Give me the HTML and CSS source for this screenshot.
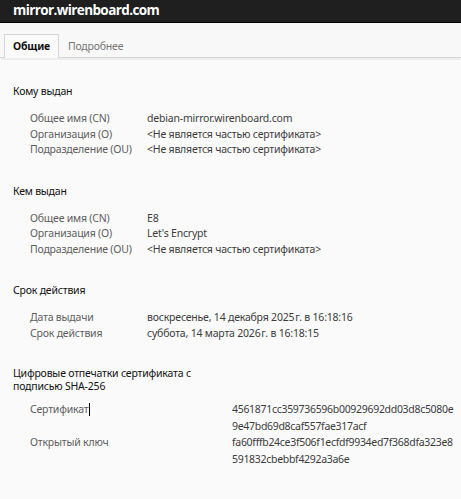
FILE: index.html
```html
<!DOCTYPE html>
<html lang="ru">
<head>
  <meta charset="UTF-8" />
  <title>Просмотр сертификата</title>
  <link rel="stylesheet" href="styles.css">
</head>
<body>
  <div class="titlebar">mirror.wirenboard.com</div>

  <div class="tabs">
    <div class="tab active">Общие</div>
    <div class="tab">Подробнее</div>
  </div>

  <div class="content">
    <!-- Subject -->
    <section class="section">
      <h2>Кому выдан</h2>
      <div class="rows">
        <div class="label">Общее имя (CN)</div>
        <div class="value">debian-mirror.wirenboard.com</div>
        <div class="label">Организация (O)</div>
        <div class="value">&lt;Не является частью сертификата&gt;</div>
        <div class="label">Подразделение (OU)</div>
        <div class="value">&lt;Не является частью сертификата&gt;</div>
      </div>
    </section>

    <!-- Issuer -->
    <section class="section">
      <h2>Кем выдан</h2>
      <div class="rows">
        <div class="label">Общее имя (CN)</div>
        <div class="value">E8</div>
        <div class="label">Организация (O)</div>
        <div class="value">Let's Encrypt</div>
        <div class="label">Подразделение (OU)</div>
        <div class="value">&lt;Не является частью сертификата&gt;</div>
      </div>
    </section>

    <!-- Validity -->
    <section class="section">
      <h2>Срок действия</h2>
      <div class="rows">
        <div class="label">Дата выдачи</div>
        <div class="value">воскресенье, 14 декабря 2025&#8202;г. в 16:18:16</div>
        <div class="label">Срок действия</div>
        <div class="value">суббота, 14 марта 2026&#8202;г. в 16:18:15</div>
      </div>
    </section>

    <!-- Fingerprints -->
    <section class="section">
      <h2 class="narrow">Цифровые отпечатки сертификата с подписью SHA-256</h2>
      <div class="rows hashes">
        <div class="label">Сертификат<span class="caret"></span></div>
        <div class="value">4561871cc359736596b00929692dd03d8c5080e<br>9e47bd69d8caf557fae317acf</div>
        <div class="label">Открытый ключ</div>
        <div class="value">fa60fffb24ce3f506f1ecfdf9934ed7f368dfa323e8<br>591832cbebbf4292a3a6e</div>
      </div>
    </section>
  </div>
</body>
</html>
```

FILE: styles.css
```css
body {
  margin: 0;
  font-family: "Noto Sans", "Open Sans", sans-serif;
  font-size: 10.5px;
  letter-spacing: -0.2px;
  color: #333;
  background: #fafafa;
}

.titlebar {
  height: 22px;
  line-height: 21px;
  padding-left: 13px;
  background: #1f1f1f;
  border-bottom: 1px solid #000;
  color: #fff;
  font-family: "Open Sans", sans-serif;
  font-weight: bold;
  font-size: 13.5px;
  letter-spacing: -0.6px;
  overflow: hidden;
}

.tabs {
  display: flex;
  padding: 11px 4px 0;
  background: #f8f8f8;
  border-bottom: 1px solid #d6d6d6;
  box-shadow: 0 3px 0 -1px #ededed;
}

.tab {
  padding: 4px 8px 5px;
  margin-bottom: -1px;
  color: #777;
  border: 1px solid transparent;
  border-bottom: none;
}

.tab.active {
  color: #111;
  font-weight: bold;
  background: #fafafa;
  border-color: #d6d6d6;
}

.content {
  padding: 26px 13px 0;
}

.section {
  margin-bottom: 26px;
}

h2 {
  margin: 0 0 12px;
  font-size: 10.5px;
  font-weight: normal;
  color: #111;
  line-height: 15px;
}

h2.narrow {
  max-width: 190px;
  line-height: 13px;
  margin-bottom: 8px;
}

.rows {
  display: grid;
  grid-template-columns: 117px 1fr;
  padding-left: 17px;
  line-height: 15.5px;
  white-space: nowrap;
}

.label {
  color: #5e5e5e;
}

.value {
  color: #3c3c3c;
}

.hashes {
  grid-template-columns: 202px 1fr;
  line-height: 16.5px;
}

.hashes .value {
  letter-spacing: -0.3px;
}

.caret {
  display: inline-block;
  width: 1px;
  height: 13px;
  margin-left: 1px;
  vertical-align: -3px;
  background: #000;
}
```
